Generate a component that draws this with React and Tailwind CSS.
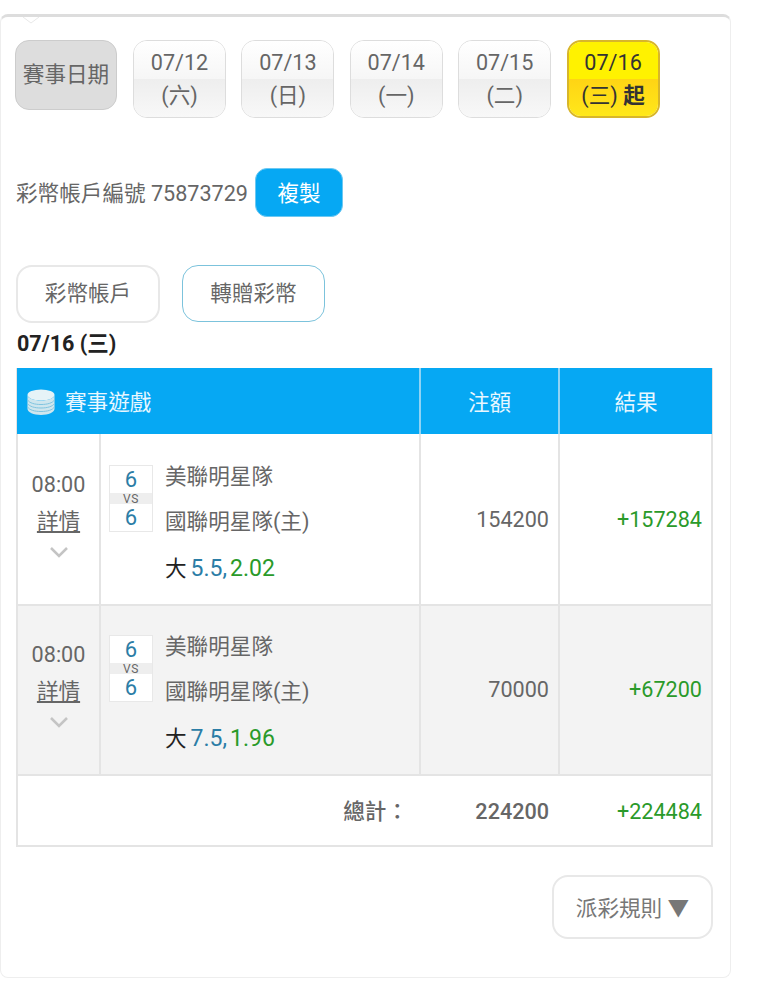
const FONT = "font-['Roboto','Noto_Sans_CJK_TC','Noto_Sans_CJK_SC',sans-serif]";

const dates = [
  { date: "07/12", day: "(六)" },
  { date: "07/13", day: "(日)" },
  { date: "07/14", day: "(一)" },
  { date: "07/15", day: "(二)" },
];

const bets = [
  {
    line: "5.5",
    odds: "2.02",
    stake: "154200",
    result: "+157284",
    rowClass: "h-[172px] bg-white",
    timeClass: "pt-[35px]",
    teamClass: "pt-[21px]",
    numClass: "pt-[2px]",
  },
  {
    line: "7.5",
    odds: "1.96",
    stake: "70000",
    result: "+67200",
    rowClass: "h-[170px] bg-[#f3f3f3]",
    timeClass: "pt-[33px]",
    teamClass: "pt-[19px]",
    numClass: "pt-0",
  },
];

const DateButton = ({ date, day }) => (
  <div className="w-[93px] h-[78px] rounded-[14px] border border-[#dddddd] overflow-hidden flex flex-col text-[#666666] text-[21.6px] leading-[33px] text-center">
    <div className="h-[38px] pt-[5px] bg-gradient-to-b from-white to-[#f6f6f6]">{date}</div>
    <div className="flex-1 bg-gradient-to-b from-[#eeeeee] to-[#f8f8f8]">{day}</div>
  </div>
);

const CoinsIcon = () => (
  <svg width="28" height="28" viewBox="0 0 28 28" className="mt-[1px]">
    <ellipse cx="14" cy="7" rx="13.5" ry="5.5" fill="#e6f3f7" />
    <path d="M.5 7v14c0 3 6 6 13.5 6s13.5-3 13.5-6V7c0 3-6 5.5-13.5 5.5S.5 10 .5 7z" fill="#cfe6ee" />
    <path d="M.5 12c2 3 7 4.500 13.500 4.500S25.500 15 27.500 12M.5 15.500c2 3 7 4.500 13.500 4.500s11.500-1.500 13.500-4.500M.5 19c2 3 7 4.500 13.500 4.500S25.500 22 27.500 19" fill="none" stroke="#7fc4e0" strokeWidth="1" />
  </svg>
);

const Chevron = () => (
  <svg width="20" height="12" viewBox="0 0 20 12" className="mx-auto">
    <path d="M2 2l8 8 8-8" fill="none" stroke="#c4c4c4" strokeWidth="2.500" />
  </svg>
);

const BetRow = ({ bet }) => (
  <div className={`grid grid-cols-[83px_320px_139px_1fr] border-b-2 border-[#e4e4e4] ${bet.rowClass}`}>
    <div className={`border-r-2 border-[#e4e4e4] text-center ${bet.timeClass}`}>
      <div className="text-[21.6px] leading-[32px] text-[#666666]">08:00</div>
      <div className="mt-[2px] text-[21.6px] leading-[38px] text-[#666666] underline">詳情</div>
      <div className="mt-[5px]">
        <Chevron />
      </div>
    </div>
    <div className={`border-r-2 border-[#e4e4e4] pl-[8px] flex gap-[12px] ${bet.teamClass}`}>
      <div className="w-[44px] h-[67px] mt-[10px] border border-[#e8e8e8] bg-white flex flex-col text-center">
        <div className="h-[27px] text-[22px] leading-[27px] text-[#2b7da6]">6</div>
        <div className="h-[11px] bg-[#eeeeee] text-[12px] leading-[12px] tracking-[0.5px] text-[#666666]">VS</div>
        <div className="flex-1 text-[22px] leading-[27px] text-[#2b7da6]">6</div>
      </div>
      <div className="text-[21.6px] text-[#666666]">
        <div className="leading-[44px]">美聯明星隊</div>
        <div className="leading-[46px]">國聯明星隊(主)</div>
        <div className="leading-[48px] flex items-baseline gap-[4px]">
          <span className="text-[#222222]">大</span>
          <span className="text-[23px]">
            <span className="text-[#2b7da6]">{bet.line},</span>
            <span className="ml-[3px] text-[#2a9a2a]">{bet.odds}</span>
          </span>
        </div>
      </div>
    </div>
    <div className={`border-r-2 border-[#e4e4e4] pr-[9px] flex items-center justify-end text-[21.6px] text-[#666666] ${bet.numClass}`}>
      {bet.stake}
    </div>
    <div className={`pr-[9px] flex items-center justify-end text-[21.6px] text-[#2a9a2a] ${bet.numClass}`}>{bet.result}</div>
  </div>
);

const App = () => {
  return (
    <div className={`${FONT} w-[758px] h-[1000px] bg-white pt-[14px]`}>
      <div className="relative w-[731px] h-[964px] border border-[#eeeeee] border-t-[3px] border-t-[#dddddd] rounded-[8px] px-[15px] pt-[23px]">
        <svg width="16" height="7" viewBox="0 0 16 7" className="absolute left-[22px] top-0">
          <path d="M0 0l8 6 8-6" fill="white" stroke="#e8e8e8" strokeWidth="1" />
        </svg>

        <div className="flex items-start -ml-[1px]">
          <div className="w-[102px] h-[70px] rounded-[14px] border border-[#cccccc] bg-[#dddddd] text-[#666666] text-[21.6px] flex items-center justify-center mr-[16px]">
            賽事日期
          </div>
          <div className="flex gap-[15.4px]">
            {dates.map((item) => (
              <DateButton key={item.date} date={item.date} day={item.day} />
            ))}
            <div className="w-[93px] h-[78px] rounded-[14px] border-2 border-[#d8b62a] overflow-hidden flex flex-col text-[#333333] text-[21.6px] leading-[33px] text-center">
              <div className="h-[37px] pt-[4px] bg-[#fff200]">07/16</div>
              <div className="flex-1 bg-gradient-to-b from-[#ffd414] to-[#ffe81a]">
                (三) <span className="font-bold">起</span>
              </div>
            </div>
          </div>
        </div>

        <div className="flex items-center mt-[50px] text-[21.6px] text-[#666666]">
          <span className="pt-[3px]">彩幣帳戶編號 75873729</span>
          <div className="ml-[7px] w-[88px] h-[49px] pt-[3px] rounded-[12px] bg-[#06a8f3] border border-[#6cc8f2] text-white flex items-center justify-center">
            複製
          </div>
        </div>

        <div className="flex gap-[22px] mt-[48px] text-[21.6px] text-[#666666]">
          <div className="w-[144px] h-[58px] pt-[1px] rounded-[16px] border-2 border-[#e8e8e8] flex items-center justify-center">
            彩幣帳戶
          </div>
          <div className="w-[143px] h-[57px] pt-[1px] rounded-[16px] border border-[#7cc3dc] flex items-center justify-center">
            轉贈彩幣
          </div>
        </div>

        <div className="mt-[7px] ml-[1px] h-[28px] text-[21.5px] leading-[28px] font-bold text-[#222222]">07/16 (三)</div>

        <div className="mt-[10px] w-[697px] border-x-2 border-b-2 border-[#e4e4e4]">
          <div className="grid grid-cols-[84px_320px_139px_1fr] h-[66px] -mx-[1px] bg-[#06a8f3] text-[21.6px] text-[#e8f7ff]">
            <div className="col-span-2 border-r-2 border-[#8fd3f4] flex items-center gap-[10px] pl-[10px]">
              <CoinsIcon />
              <span className="pt-[5px]">賽事遊戲</span>
            </div>
            <div className="border-r-2 border-[#8fd3f4] pt-[5px] flex items-center justify-center">注額</div>
            <div className="pt-[5px] flex items-center justify-center">結果</div>
          </div>
          {bets.map((bet) => (
            <BetRow key={bet.stake} bet={bet} />
          ))}
          <div className="grid grid-cols-[403px_139px_1fr] h-[69px] pt-[4px] items-center text-[21.6px]">
            <div className="text-right font-medium text-[#666666] pr-[13px]">總計：</div>
            <div className="text-right font-medium text-[#666666] pr-[11px]">224200</div>
            <div className="text-right text-[#2a9a2a] pr-[9px]">+224484</div>
          </div>
        </div>

        <div className="flex justify-end mt-[28px] w-[697px]">
          <div className="w-[161px] h-[64px] pt-[4px] rounded-[16px] border-2 border-[#e8e8e8] flex items-center justify-center text-[21.6px] text-[#777777]">
            派彩規則 ▼
          </div>
        </div>
      </div>
    </div>
  );
};

export default App;
